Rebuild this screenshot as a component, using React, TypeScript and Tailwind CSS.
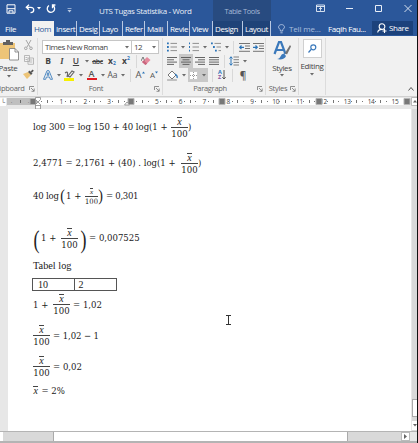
import React from "react";
import type { ReactNode } from "react";

const UI = "font-['Open_Sans','Noto_Sans',sans-serif]";
const MATH = "font-['DejaVu_Serif_Condensed','DejaVu_Serif',serif]";

function Cell({ w, className = "", children }: { w: string; className?: string; children?: ReactNode }) {
  return <span className={`flex h-full shrink-0 items-center justify-center ${w} ${className}`}>{children}</span>;
}

function Caret({ w = "w-[7px]" }: { w?: string }) {
  return (
    <Cell w={w}>
      <svg width="4" height="3" viewBox="0 0 4 3" fill="#6b6b6b"><path d="M0 0h4L2 2.4z" /></svg>
    </Cell>
  );
}

function Rule({ w }: { w: string }) {
  return <Cell w={w}><span className="h-[13px] w-px bg-[#d8d8d8]" /></Cell>;
}

function Launcher() {
  return (
    <svg width="6" height="6" viewBox="0 0 6 6" fill="none" stroke="#777" strokeWidth=".8">
      <path d="M.5 4V.5H5M2 2l3 3M5.2 2.5v2.8H2.5" />
    </svg>
  );
}

function Tab({ w, active, children }: { w: string; active?: boolean; children: ReactNode }) {
  return (
    <span className={`flex h-[15px] shrink-0 items-center pl-[2px] whitespace-nowrap ${w} ${active ? "bg-[#f1f1f1] text-[#2b579a]" : "border-r border-[#b9c9e2] text-white"}`}>
      {children}
    </span>
  );
}

function TitleBar() {
  return (
    <div className="flex h-[21px] bg-[#2b579a] text-[#e8eef7]">
      <div className="flex w-[99px] shrink-0 items-center pb-[4px] pl-[6px]">
        <svg width="10" height="10" viewBox="0 0 10 10" fill="none" stroke="#fff" strokeWidth="1" className="mt-px">
          <path d="M1 .8h8v8.4H1zM1 4.7h8M3 9V6.8h4V9" />
        </svg>
        <svg width="10" height="10" viewBox="0 0 10 10" fill="none" stroke="#fff" strokeWidth="1.3" className="ml-[9px]">
          <path d="M4 .8 1.3 3.3 4 5.8M1.5 3.3h4.2c4.2 0 4 5.3-.2 5.3" />
        </svg>
        <svg width="4" height="3" viewBox="0 0 4 3" fill="#fff" className="ml-[2px]"><path d="M0 0h4L2 2.4z" /></svg>
        <svg width="10" height="10" viewBox="0 0 10 10" fill="none" stroke="#fff" strokeWidth="1.3" className="ml-[5px]">
          <path d="M3 1.5A3.7 3.7 0 1 0 7 1.6M9.4 1H6.5v3.2" />
        </svg>
        <svg width="5" height="5" viewBox="0 0 5 5" fill="#b7c8e2" className="mt-[3px] ml-[11px]"><path d="M.5 0h4v.8h-4zM.5 2h4L2.5 4.4z" /></svg>
      </div>
      <div className="w-[114px] shrink-0 pt-[5px] text-[8px] leading-[12px] tracking-[-0.34px] whitespace-nowrap">UTS Tugas Statistika - Word</div>
      <div className="w-[58px] shrink-0 bg-[#284b80] pt-[5px] text-center text-[7.500px] leading-[12px] tracking-[-0.400px] whitespace-nowrap text-[#a6b9d6]">Table Tools</div>
      <div className="flex grow items-start pt-[4px] pl-[45px]">
        <svg width="9" height="9" viewBox="0 0 9 9" fill="none" stroke="#e8eef7" strokeWidth=".9">
          <path d="M.5 1h8v6.500h-8zM.5 2.500h8M4.500 6.800V3.500M3 5l1.500-1.500L6 5" />
        </svg>
        <svg width="7" height="9" viewBox="0 0 7 9" stroke="#e8eef7" className="ml-[21px]"><path d="M0 4.500h7" /></svg>
        <svg width="8" height="9" viewBox="0 0 8 9" fill="none" stroke="#e8eef7" className="ml-[22px]"><path d="M.5 1.500h6v6h-6z" /></svg>
        <svg width="8" height="9" viewBox="0 0 8 9" stroke="#e8eef7" strokeWidth=".9" className="ml-[21px]"><path d="m.5 1 7 7m0-7-7 7" /></svg>
      </div>
    </div>
  );
}

function TabBar() {
  return (
    <div className="flex h-[15px] bg-[#2b579a] text-[8px] leading-[14px] tracking-[-0.380px] text-white">
      <span className="flex w-[32px] shrink-0 items-center pl-[5px]">File</span>
      <Tab w="w-[22px]" active>Hom</Tab>
      <Tab w="w-[23px]">Insert</Tab>
      <Tab w="w-[23px]">Desig</Tab>
      <Tab w="w-[23px]">Layo</Tab>
      <Tab w="w-[22px]">Refer</Tab>
      <Tab w="w-[23px]">Maili</Tab>
      <Tab w="w-[22px]">Revie</Tab>
      <Tab w="w-[23px]">View</Tab>
      <div className="flex w-[58px] shrink-0 bg-[#1f4378]">
        <Tab w="w-[30px]">Design</Tab>
        <Tab w="w-[28px]">Layout</Tab>
      </div>
      <span className="flex w-[56px] shrink-0 items-center pl-[7px] tracking-[-0.150px] whitespace-nowrap text-[#a9bedd]">
        <svg width="7" height="10" viewBox="0 0 7 10" fill="none" stroke="#b9cae5" strokeWidth=".9" className="mr-[4px]">
          <path d="M2.300 7V5.600C-.9 3.500.8.6 3.500.6s4.400 2.900 1.200 5V7zM2.400 8.800h2.200" />
        </svg>
        Tell me...
      </span>
      <span className="flex w-[45px] shrink-0 items-center pl-px whitespace-nowrap">Faqih Fau...</span>
      <span className="flex h-[14px] w-[41px] shrink-0 items-center bg-[#1c427c] pl-[5px]">
        <svg width="10" height="11" viewBox="0 0 10 11" fill="none" stroke="#fff" strokeWidth="1.100" className="mr-[2px]">
          <path d="M.7 9.500C1 6.500 3 6.400 5 6.400M5 .7a2.800 2.800 0 1 1 0 5.700A2.800 2.800 0 0 1 5 .7M7.500 6v4M5.500 8h4" />
        </svg>
        Share
      </span>
    </div>
  );
}

function Group({ w, label, launcher, children }: { w: string; label: ReactNode; launcher?: boolean; children: ReactNode }) {
  return (
    <section className={`flex h-[57px] shrink-0 flex-col border-r border-[#dcdcdc] ${w}`}>
      <div className="h-[44px]">{children}</div>
      <div className="flex h-[13px] items-center justify-end pr-[2px] text-[7.500px] tracking-[-0.300px] whitespace-nowrap text-[#666]">
        <span className="grow text-center">{label}</span>
        {launcher && <Launcher />}
      </div>
    </section>
  );
}

function Clipboard() {
  return (
    <Group w="w-[38px]" launcher label={<span className="-ml-[11px]">Clipboard</span>}>
      <div className="flex h-full">
        <div className="flex w-[20px] flex-col items-center">
          <svg width="20" height="21" viewBox="0 0 20 21" className="mt-[2px] shrink-0">
            <path d="M0 3h15v16H0z" fill="#edc477" />
            <path d="M3 5V2h3V0h4v2h3v3z" fill="#606060" />
            <path d="M9.500 8.500h5.500l3.500 3.500v8h-9z" fill="#fff" stroke="#777" strokeWidth=".8" />
            <path d="M15 8.500V12h3.500" fill="none" stroke="#777" strokeWidth=".8" />
          </svg>
          <span className="-ml-[4px] text-[8px] leading-[13px] tracking-[-0.300px] text-[#444]">Paste</span>
          <svg width="4" height="3" viewBox="0 0 4 3" fill="#666" className="mt-px -ml-[3px]"><path d="M0 0h4L2 2.400z" /></svg>
        </div>
        <div className="flex grow flex-col items-center">
          <svg width="9" height="11" viewBox="0 0 9 11" fill="none" stroke="#a5a5a5" className="mt-[2px]">
            <path d="m2 0 4 7m1-7L3 7" /><circle cx="1.800" cy="8.300" r="1.300" /><circle cx="7" cy="8.300" r="1.300" />
          </svg>
          <svg width="10" height="10" viewBox="0 0 10 10" fill="#f4f4f4" stroke="#aaa" strokeWidth=".8" className="mt-[4px]">
            <path d="M.5.5h5v6h-5zM4 3h5.500v6.300H4zM5.300 5h3M5.300 7h3M1.500 2.500h2M1.500 4.500h2" />
          </svg>
          <svg width="11" height="10" viewBox="0 0 11 10" className="mt-[4px]">
            <path d="M0 5 5 3l3 3-4 4z" fill="#edc477" /><path d="m5 3 1.500-1.500 3 3L8 6z" fill="#555" /><path d="m7.500 2.700 2-2.200 1.300 1.200-2 2z" fill="#555" />
          </svg>
        </div>
      </div>
    </Group>
  );
}

function FontGroup() {
  return (
    <Group w="w-[125px]" launcher label="Font">
      <div className="flex h-[16px] items-start pt-[2px] pl-[4px] text-[8px] leading-[12px] tracking-[-0.450px] text-[#444]">
        <span className="flex h-[14px] w-[90px] items-center justify-between border border-[#c6c6c6] bg-white pl-[2px] whitespace-nowrap">Times New Roman<Caret w="w-[8px]" /></span>
        <span className="flex h-[14px] w-[27px] items-center justify-between border border-l-0 border-[#c6c6c6] bg-white pl-[2px]">12<Caret w="w-[8px]" /></span>
      </div>
      <div className="flex h-[14px] items-center pl-[3px] text-[8.500px] leading-none text-[#444]">
        <Cell w="w-[14px]" className="font-bold">B</Cell>
        <Cell w="w-[14px]" className="font-['Liberation_Serif',serif] font-bold italic">I</Cell>
        <Cell w="w-[14px]" className="font-semibold underline">U</Cell>
        <Caret />
        <Cell w="w-[15px]" className="text-[7px] font-semibold tracking-[-0.400px] line-through">abc</Cell>
        <Cell w="w-[14px]" className="font-bold">x<span className="mt-[4px] text-[5px] text-[#2b74b8]">2</span></Cell>
        <Cell w="w-[14px]" className="font-bold">x<span className="mb-[5px] text-[5px] text-[#2b74b8]">2</span></Cell>
        <Rule w="w-[6px]" />
        <Cell w="w-[14px]">
          <svg width="10" height="10" viewBox="0 0 10 10"><path d="m1 6 5-5 3.500 3-5 5z" fill="#e58a9d" /><path d="m1 6 1.700-1.600 3.500 3L4.500 9z" fill="#c9657d" /><path d="m0 5 2-4 1.500 3.500" fill="none" stroke="#777" /></svg>
        </Cell>
      </div>
      <div className="flex h-[14px] items-center pl-[3px] leading-none text-[#555]">
        <Cell w="w-[14px]">
          <svg width="10" height="10" viewBox="0 0 10 10" fill="none" stroke="#3e7fbd" strokeWidth=".9"><path d="M.5 9.300 4 .7h2l3.500 8.600H7.300L6.500 7H3.400l-.7 2.300zM4 5.200h2L5 2.500z" /></svg>
        </Cell>
        <Caret />
        <Cell w="w-[15px]">
          <svg width="11" height="11" viewBox="0 0 11 11"><path d="M0 8h10v3H0z" fill="#f6f000" /><path d="m4 6 4-5 2 1-4 5zM1 3c3-2 3 0 2 4" fill="none" stroke="#666" strokeWidth="1.200" /></svg>
        </Cell>
        <Caret />
        <Cell w="w-[15px]" className="flex-col text-[9px] font-semibold"><span className="leading-[8px]">A</span><span className="h-[2.500px] w-[10px] bg-[#e01b22]" /></Cell>
        <Caret />
        <Cell w="w-[13px]" className="text-[8.500px]">Aa</Cell>
        <Caret />
        <Rule w="w-[9px]" />
        <Cell w="w-[10px]" className="text-[9.500px]">A<svg width="3" height="3" viewBox="0 0 3 3" fill="#2b74b8" className="mb-[6px]"><path d="M0 2.500 1.500.5 3 2.500z" /></svg></Cell>
        <Cell w="w-[18px]" className="text-[8px]">A<svg width="3" height="3" viewBox="0 0 3 3" fill="#2b74b8" className="mb-[6px]"><path d="M0 .5h3l-1.500 2z" /></svg></Cell>
      </div>
    </Group>
  );
}

function Bullets({ kind }: { kind: "dots" | "numbers" | "levels" }) {
  const offsets = kind === "levels" ? [0, 2, 4] : [0, 0, 0];
  const size = kind === "numbers" ? 1 : 1.8;
  return (
    <svg width="10" height="10" viewBox="0 0 10 10">
      {offsets.map((o, i) => (
        <g key={i}>
          <path d={`M${o} ${0.5 + i * 3.6}h${size}v1.8h-${size}z`} fill="#2b74b8" />
          <path d={`M${3.5 + o} ${1.4 + i * 3.6}H10`} stroke="#777" strokeWidth=".8" />
        </g>
      ))}
    </svg>
  );
}

function Align({ d }: { d: string }) {
  return <svg width="10" height="8" viewBox="0 0 10 8" stroke="#555" strokeWidth=".9"><path d={d} /></svg>;
}

function Indent({ d }: { d: string }) {
  return (
    <svg width="11" height="9" viewBox="0 0 11 9" fill="none">
      <path d="M0 .5h11M6 3h5M6 5.500h5M0 8.300h11" stroke="#666" strokeWidth=".9" />
      <path d={d} stroke="#2b74b8" strokeWidth="1.200" />
    </svg>
  );
}

function Paragraph() {
  return (
    <Group w="w-[103px]" launcher label="Paragraph">
      <div className="flex h-[16px] items-center pt-[2px] pl-[2px]">
        <Cell w="w-[14px]"><Bullets kind="dots" /></Cell><Caret />
        <Cell w="w-[15px]"><Bullets kind="numbers" /></Cell><Caret />
        <Cell w="w-[16px]"><Bullets kind="levels" /></Cell><Caret w="w-[5px]" />
        <Rule w="w-[8px]" />
        <Cell w="w-[14px]"><Indent d="M5 4.300H.8M2.500 2.500.7 4.300l1.800 1.800" /></Cell>
        <Cell w="w-[14px]"><Indent d="M0 4.300h4.200M2.500 2.500l1.800 1.800-1.800 1.800" /></Cell>
      </div>
      <div className="flex h-[14px] items-center pl-[2px]">
        <Cell w="w-[14px]"><Align d="M0 .5h10M0 2.800h7M0 5.100h10M0 7.400h7" /></Cell>
        <Cell w="w-[14px]" className="bg-[#c8c8c8]"><Align d="M0 .5h10M1.500 2.800h7M0 5.100h10M1.500 7.400h7" /></Cell>
        <Cell w="w-[14px]"><Align d="M0 .5h10M3 2.800h7M0 5.100h10M3 7.400h7" /></Cell>
        <Cell w="w-[14px]"><Align d="M0 .5h10M0 2.800h10M0 5.100h10M0 7.400h10" /></Cell>
        <Rule w="w-[6px]" />
        <Cell w="w-[14px]">
          <svg width="10" height="10" viewBox="0 0 10 10" fill="none"><path d="M4.500 1H10M4.500 3.700H10M4.500 6.400H10M4.500 9H10" stroke="#666" strokeWidth=".8" /><path d="M2 .8v8.400M.5 2.500 2 .8l1.500 1.700M.5 7.500 2 9.200l1.500-1.700" stroke="#2b74b8" /></svg>
        </Cell>
        <Caret />
      </div>
      <div className="flex h-[14px] items-center pl-[2px]">
        <Cell w="w-[14px]">
          <svg width="11" height="11" viewBox="0 0 11 11"><path d="m1 5 4-4 4 4-4 4z" fill="#fff" stroke="#777" /><path d="M8 4c2 1 2.500 2.500 2 4" fill="none" stroke="#2b74b8" strokeWidth="1.300" /><path d="M.5 9.500h9v1h-9z" fill="#fff" stroke="#999" strokeWidth=".6" /></svg>
        </Cell>
        <Caret w="w-[9px]" />
        <Cell w="w-[20px]" className="bg-[#c8c8c8]">
          <svg width="9" height="9" viewBox="0 0 9 9" className="mr-[2px]"><path d="M0 0h9v9H0z" fill="#fff" /><path d="M.5.5h8v8h-8zM4.500 1v7M1 4.500h7" fill="none" stroke="#999" strokeDasharray="1 1" /></svg>
          <Caret />
        </Cell>
        <Rule w="w-[8px]" />
        <Cell w="w-[12px]">
          <span className="flex flex-col text-[5.500px] leading-[5.500px] font-bold"><span className="h-[5.500px] text-[#2b74b8]">A</span><span className="h-[5.500px] text-[#8a55a0]">Z</span></span>
          <svg width="4" height="10" viewBox="0 0 4 10" fill="none" stroke="#555"><path d="M2 0v9M.3 7.300 2 9l1.700-1.700" /></svg>
        </Cell>
        <Rule w="w-[8px]" />
        <Cell w="w-[14px]" className="text-[10px] leading-none font-semibold text-[#555]">¶</Cell>
      </div>
    </Group>
  );
}

function Ribbon() {
  return (
    <div className="flex h-[60px] items-start bg-[#f1f1f1] pt-[2px]">
      <Clipboard />
      <FontGroup />
      <Paragraph />
      <Group w="w-[33px]" launcher label="Styles">
        <div className="flex flex-col items-center text-[8px] tracking-[-0.350px] text-[#444]">
          <svg width="18" height="21" viewBox="0 0 18 21" className="mt-[2px]">
            <path d="m1.500 14 4.500-12h2l4.500 12M3.500 10h7" fill="none" stroke="#3b79bb" strokeWidth="2.200" />
            <path d="m17 5-5 8 2 1.500 4-8z" fill="#737373" /><path d="M4 19c4 0 3-5 7-5.500l2 2.500c-1 3-5 4-9 3" fill="#3b79bb" />
          </svg>
          <span className="leading-[13px]">Styles</span>
          <Caret />
        </div>
      </Group>
      <Group w="w-[27px]" label="">
        <div className="flex flex-col items-center text-[8px] tracking-[-0.350px] text-[#444]">
          <span className="mt-px flex h-[19px] w-[19px] items-center justify-center border border-[#d0d0d0] bg-white">
            <svg width="9" height="9" viewBox="0 0 9 9" fill="none" stroke="#3b79bb" strokeWidth="1.200"><circle cx="5.300" cy="3.300" r="2.500" /><path d="M3.500 5 .5 8.500" /></svg>
          </span>
          <span className="leading-[15px]">Editing</span>
          <Caret />
        </div>
      </Group>
      <div className="flex h-[57px] grow items-end justify-end pr-[3px] pb-[4px]">
        <svg width="6" height="4" viewBox="0 0 6 4" fill="none" stroke="#555"><path d="m.5 3.500 2.500-3 2.500 3" /></svg>
      </div>
    </div>
  );
}

const marks = Array.from({ length: 15 }, (_, i) => i + 1);

function Ruler() {
  return (
    <div className="relative flex h-[13px] items-start border-t border-[#d0d0d0] bg-[#e7e7e7] pt-px">
      <span className="flex h-[8px] w-[6px] items-center justify-center bg-white text-[6px] text-[#555]">└</span>
      <span className="ml-px flex h-[7px] w-[30px] shrink-0 items-center justify-around bg-[#bfbfbf] pr-[4px] text-[6px] leading-none text-[#444]"><span>·</span><span className="h-[3px] w-px bg-[#666]" /><span>·</span></span>
      <div className={`flex h-[7px] w-[373px] overflow-hidden bg-white pl-[4px] text-[6.500px] leading-[7px] text-[#444] ${UI}`}>
        {marks.map((n) => (
          <span key={n} className="flex w-[23.830px] shrink-0 items-center justify-between">
            <span className="h-px w-px bg-[#777]" /><span className="h-[3px] w-px bg-[#777]" /><span className="h-px w-px bg-[#777]" />
            <span className="w-[7px] text-center tracking-[-0.300px]">{n === 4 ? "" : n}</span>
          </span>
        ))}
      </div>
      <svg width="418" height="13" viewBox="0 0 418 13" className="absolute inset-0">
        {[30, 128, 219, 316, 404].map((x) => <path key={x} d={`M${x} 1.500h6v6h-6z`} fill="#777" stroke="#b5b5b5" />)}
        <path d="M35.500.5h5v2L38 5l2.500 2.500V12h-5V7.500L38 5l-2.500-2.500zM35.500 8.500h5" fill="#fff" stroke="#888" strokeWidth=".8" />
        <path d="m124.500 8 2.500-3 2.500 3z" fill="#fff" stroke="#888" strokeWidth=".8" />
        <path d="M411.500.5h7v8h-7z" fill="#fff" stroke="#bbb" /><path d="m413 5.500 2-2.500 2 2.500z" fill="#666" />
      </svg>
    </div>
  );
}

function XBar({ small, className = "" }: { small?: boolean; className?: string }) {
  return (
    <span className={`border-t border-[#444] pt-px font-['Liberation_Serif',serif] italic ${className} ${small ? "text-[7px] leading-[4px]" : "px-[0.5px] text-[10px] leading-[5px]"}`}>x</span>
  );
}

function Frac({ small }: { small?: boolean }) {
  return (
    <span className={`flex shrink-0 flex-col items-center ${small ? "w-[13px]" : "w-[17px]"}`}>
      <XBar small={small} />
      <span className={`w-full border-t border-[#444] text-center ${small ? "mt-[2px] pt-px text-[7.500px] leading-[7px]" : "mt-[3px] pt-[2px] leading-[8px]"}`}>100</span>
    </span>
  );
}

function Eq({ className, children }: { className: string; children: ReactNode }) {
  return <div className={`flex items-center whitespace-pre ${className}`}>{children}</div>;
}

function T({ w, className = "", children }: { w: string; className?: string; children: ReactNode }) {
  return <span className={`shrink-0 ${w} ${className}`}>{children}</span>;
}

function Paren({ tall, children }: { tall?: boolean; children: string }) {
  return (
    <span className={`flex shrink-0 items-center justify-center font-['Liberation_Serif',serif] leading-none ${tall ? "h-[25px] w-[7px] scale-y-[1.400] text-[18px]" : "h-[16px] w-[5px] scale-y-[1.200] text-[14px]"}`}>{children}</span>
  );
}

function Page() {
  return (
    <div className={`h-[322px] w-[403px] bg-white pl-[25px] text-[9.500px] leading-[10px] text-[#222] ${MATH}`}>
      <Eq className="h-[36px]"><T w="w-[138px]" className="tracking-[-0.030px]">log 300 = log 150 + 40 log(1 +</T><Frac /><T w="w-[5px]">)</T></Eq>
      <Eq className="h-[36px]"><T w="w-[148px]">2,4771 = 2,1761 + (40) . log(1 +</T><Frac /><T w="w-[5px]">)</T></Eq>
      <Eq className="h-[30px]"><T w="w-[27px]" className="tracking-[-0.200px]">40 log</T><Paren>(</Paren><T w="w-[20px]" className="pl-px">1 +</T><Frac small /><Paren>)</Paren><T w="w-[40px]" className="pl-[3px] tracking-[-0.300px]">= 0,301</T></Eq>
      <Eq className="mt-[6px] h-[42px]"><Paren tall>(</Paren><T w="w-[21px]" className="pl-px">1 +</T><Frac /><span className="w-[2px]" /><Paren tall>)</Paren><T w="w-[60px]" className="pl-[2px]">= 0,007525</T></Eq>
      <div className="h-[13px] font-['Liberation_Serif',serif] text-[10.300px] leading-[13px]">Tabel log</div>
      <div className="mt-[6px] -ml-px grid h-[13px] w-[85px] grid-cols-2 border border-[#555] font-['Liberation_Serif',serif] text-[10px] leading-[12px]">
        <span className="border-r border-[#555] pl-[5px]">10</span><span className="pl-[4px]">2</span>
      </div>
      <Eq className="h-[27px]"><T w="w-[20px]">1 +</T><Frac /><T w="w-[40px]" className="pl-[3px]">= 1,02</T></Eq>
      <Eq className="h-[35px]"><Frac /><T w="w-[60px]" className="pl-[3px] tracking-[-0.100px]">= 1,02 − 1</T></Eq>
      <Eq className="h-[27px]"><Frac /><T w="w-[60px]" className="pl-[3px]">= 0,02</T></Eq>
      <Eq className="h-[22px]"><XBar className="-mt-[3px]" /><T w="w-[40px]" className="pl-[3px]">= 2%</T></Eq>
    </div>
  );
}

export default function App() {
  return (
    <div className={`flex h-[443px] w-[418px] overflow-hidden bg-[#e7e7e7] ${UI}`}>
      <div className="flex w-[417px] shrink-0 flex-col overflow-hidden">
        <TitleBar />
        <TabBar />
        <Ribbon />
        <Ruler />
        <main className="relative flex h-[322px] pl-[8px]">
          <Page />
          <div className="ml-px flex w-[5px] flex-col justify-end bg-[#d9d9d9] pb-px">
            <span className="mb-[4px] h-[18px] border border-r-0 border-[#aaa] bg-white" />
            <span className="flex h-[9px] items-center justify-center bg-white"><svg width="4" height="3" viewBox="0 0 4 3" fill="#666"><path d="M0 0h4L2 2.400z" /></svg></span>
          </div>
          <svg width="5" height="10" viewBox="0 0 5 10" fill="none" stroke="#333" className="absolute top-[206px] left-[226px]"><path d="M0 .5h5M0 9.500h5M2.500 1v8" /></svg>
        </main>
        <div className="flex h-[12px] border-t border-b-2 border-[#b4b4b4] bg-[#e7e7e7]">
          <span className="w-[3px] bg-white" />
          <span className="w-[50px] bg-[#d9d9d9]" />
          <span className="w-[295px] border-x border-[#aaa] bg-white" />
          <span className="w-[53px] bg-[#d9d9d9]" />
          <span className="flex w-[9px] items-center justify-center border border-[#bbb] bg-white"><svg width="3" height="5" viewBox="0 0 3 5" fill="#666"><path d="M0 0v5l3-2.500z" /></svg></span>
        </div>
      </div>
      <div className="w-px bg-[#111]" />
    </div>
  );
}
